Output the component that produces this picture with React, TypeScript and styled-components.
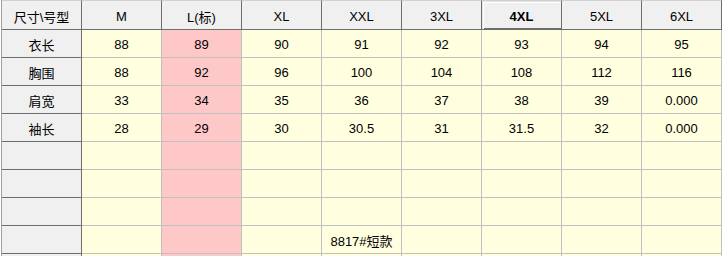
import React from "react";
import styled, { createGlobalStyle, css } from "styled-components";

const Global = createGlobalStyle`
  html, body { margin: 0; padding: 0; background: #ffffff; }
  body { font-family: "Liberation Sans", "Noto Sans CJK SC", sans-serif; }
`;

const Viewport = styled.div`
  width: 723px;
  height: 256px;
  overflow: hidden;
  background: #ffffff;
`;

const Grid = styled.div`
  display: grid;
  grid-template-columns: repeat(9, 80px);
  margin-left: 1px;
  width: 720px;
  border-left: 1px solid #a0a0a0;
`;

const cellText = css`
  display: flex;
  align-items: center;
  justify-content: center;
  box-sizing: border-box;
  font-size: 13px;
  color: #000000;
  white-space: nowrap;
`;

const HeaderCell = styled.div<{ $active?: boolean }>`
  ${cellText};
  height: 30px;
  padding-top: 2px;
  background: #f0f0f0;
  border-top: 1px solid #d0d0d0;
  border-right: 1px solid #6e6e6e;
  border-bottom: 1px solid #6e6e6e;
  ${(p) =>
    p.$active &&
    css`
      font-weight: bold;
      box-shadow: inset 1px 1px 0 #e4e4e4, inset 2px 2px 0 #ffffff,
        inset 0 -1px 0 #6e6e6e;
    `}
`;

const RowHead = styled.div`
  ${cellText};
  height: 28px;
  padding-top: 1px;
  background: #f0f0f0;
  border-right: 1px solid #6e6e6e;
  border-bottom: 1px solid #6e6e6e;
`;

const DataCell = styled.div<{ $pink?: boolean }>`
  ${cellText};
  height: 28px;
  padding-top: 1px;
  background: ${(p) => (p.$pink ? "#ffc8c8" : "#ffffe0")};
  border-right: 1px solid #c0c0c0;
  border-bottom: 1px solid #c0c0c0;
`;

const sizes = ["M", "L(标)", "XL", "XXL", "3XL", "4XL", "5XL", "6XL"];

const rows: { label: string; values: string[] }[] = [
  { label: "衣长", values: ["88", "89", "90", "91", "92", "93", "94", "95"] },
  { label: "胸围", values: ["88", "92", "96", "100", "104", "108", "112", "116"] },
  { label: "肩宽", values: ["33", "34", "35", "36", "37", "38", "39", "0.000"] },
  { label: "袖长", values: ["28", "29", "30", "30.5", "31", "31.5", "32", "0.000"] },
  { label: "", values: ["", "", "", "", "", "", "", ""] },
  { label: "", values: ["", "", "", "", "", "", "", ""] },
  { label: "", values: ["", "", "", "", "", "", "", ""] },
  { label: "", values: ["", "", "", "8817#短款", "", "", "", ""] },
  { label: "", values: ["", "", "", "", "", "", "", ""] },
];

export default function App() {
  return (
    <>
      <Global />
      <Viewport>
        <Grid>
          <HeaderCell>尺寸\号型</HeaderCell>
          {sizes.map((s) => (
            <HeaderCell key={s} $active={s === "4XL"}>
              {s}
            </HeaderCell>
          ))}
          {rows.map((r, ri) => (
            <React.Fragment key={ri}>
              <RowHead>{r.label}</RowHead>
              {r.values.map((v, ci) => (
                <DataCell key={ci} $pink={ci === 1}>
                  {v}
                </DataCell>
              ))}
            </React.Fragment>
          ))}
        </Grid>
      </Viewport>
    </>
  );
}
